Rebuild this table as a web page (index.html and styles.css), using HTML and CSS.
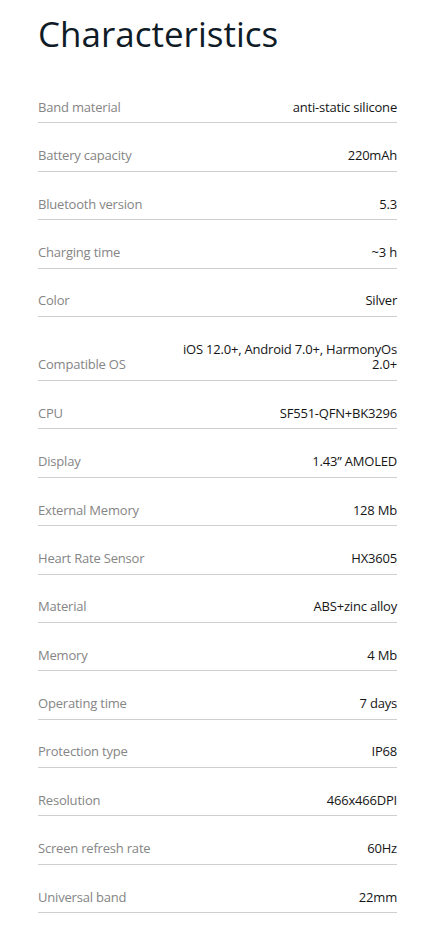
FILE: index.html
```html
<!doctype html>
<html lang="en">

<head>
  <meta charset="UTF-8" />
  <meta name="viewport" content="width=device-width, initial-scale=1.0" />
  <title>Characteristics</title>
  <link rel="stylesheet" href="styles.css">
</head>

<body>
  <div class="container">
    <h1 class="title">Characteristics</h1>

    <div class="specs">
      <div class="spec-row">
        <span class="spec-label">Band material</span>
        <span class="spec-value">anti-static silicone</span>
      </div>
      <div class="spec-row">
        <span class="spec-label">Battery capacity</span>
        <span class="spec-value">220mAh</span>
      </div>
      <div class="spec-row">
        <span class="spec-label">Bluetooth version</span>
        <span class="spec-value">5.3</span>
      </div>
      <div class="spec-row">
        <span class="spec-label">Charging time</span>
        <span class="spec-value">~3 h</span>
      </div>
      <div class="spec-row">
        <span class="spec-label">Color</span>
        <span class="spec-value">Silver</span>
      </div>
      <div class="spec-row">
        <span class="spec-label">Compatible OS</span>
        <span class="spec-value">iOS 12.0+, Android 7.0+, HarmonyOs 2.0+</span>
      </div>
      <div class="spec-row">
        <span class="spec-label">CPU</span>
        <span class="spec-value">SF551-QFN+BK3296</span>
      </div>
      <div class="spec-row">
        <span class="spec-label">Display</span>
        <span class="spec-value">1.43” AMOLED</span>
      </div>
      <div class="spec-row">
        <span class="spec-label">External Memory</span>
        <span class="spec-value">128 Mb</span>
      </div>
      <div class="spec-row">
        <span class="spec-label">Heart Rate Sensor</span>
        <span class="spec-value">HX3605</span>
      </div>
      <div class="spec-row">
        <span class="spec-label">Material</span>
        <span class="spec-value">ABS+zinc alloy</span>
      </div>
      <div class="spec-row">
        <span class="spec-label">Memory</span>
        <span class="spec-value">4 Mb</span>
      </div>
      <div class="spec-row">
        <span class="spec-label">Operating time</span>
        <span class="spec-value">7 days</span>
      </div>
      <div class="spec-row">
        <span class="spec-label">Protection type</span>
        <span class="spec-value">IP68</span>
      </div>
      <div class="spec-row">
        <span class="spec-label">Resolution</span>
        <span class="spec-value">466x466DPI</span>
      </div>
      <div class="spec-row">
        <span class="spec-label">Screen refresh rate</span>
        <span class="spec-value">60Hz</span>
      </div>
      <div class="spec-row">
        <span class="spec-label">Universal band</span>
        <span class="spec-value">22mm</span>
      </div>
    </div>
  </div>
</body>

</html>
```

FILE: styles.css
```css
* {
  margin: 0;
  padding: 0;
  box-sizing: border-box;
}

body {
  font-family: 'Open Sans', 'Noto Sans', sans-serif;
  background-color: #ffffff;
}

.container {
  padding: 0 37px 0 38px;
}

.title {
  font-size: 35px;
  font-weight: 400;
  line-height: 1.2;
  color: #0f1b26;
  padding-top: 13px;
  margin-bottom: 20px;
}

.specs {
  display: flex;
  flex-direction: column;
}

.spec-row {
  display: flex;
  justify-content: space-between;
  align-items: flex-end;
  gap: 24px;
  padding: 24.8px 0 7px;
  border-bottom: 1px solid #cfcfcf;
  font-size: 13px;
  line-height: 15.6px;
  letter-spacing: -0.2px;
}

.spec-label {
  color: #858585;
  white-space: nowrap;
}

.spec-value {
  color: #161616;
  text-align: right;
  max-width: 225px;
}
```
